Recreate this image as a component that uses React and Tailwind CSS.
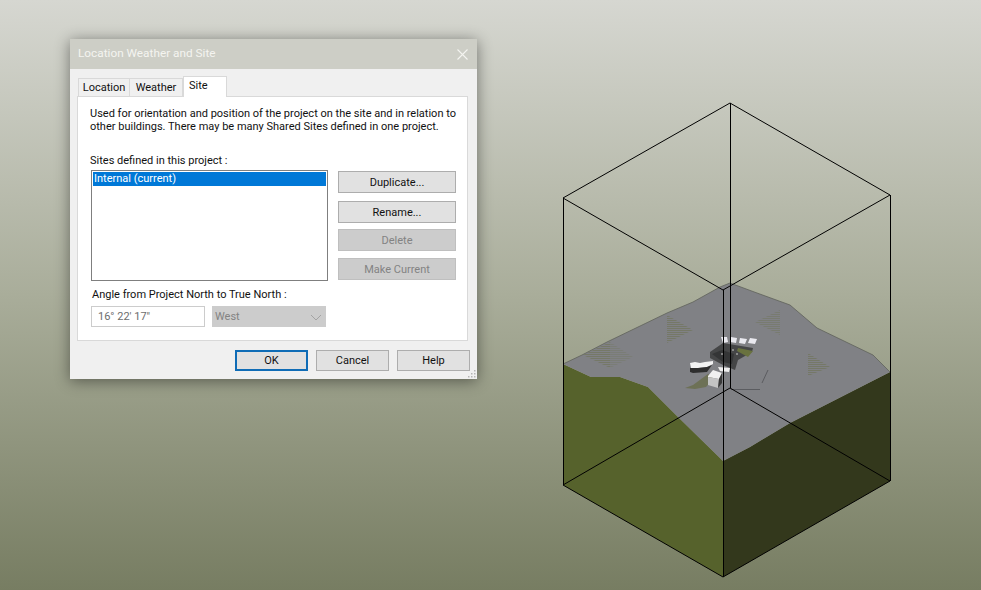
import React from 'react';

const font = { fontFamily: 'Roboto, "Open Sans", sans-serif' };

// Perspective box with the terrain sitting inside it
const SiteModel = () => (
  <svg className="absolute inset-0" width="981" height="590" viewBox="0 0 981 590" fill="none">
    <defs>
      <pattern id="hatch" width="4" height="2" patternUnits="userSpaceOnUse">
        <rect width="4" height="0.8" fill="#6b7150" />
      </pattern>
    </defs>

    {/* side faces */}
    <polygon points="563,364 591,377 620,377 648,387 678,417 723,461 723,577 563,485" fill="#56622c" />
    <polygon points="723,461 750,447 790,423 890,372 890,481 723,577" fill="#33381c" />

    {/* terrain top */}
    <polygon
      points="563,364 582,355 607,342 667,313 693,302 720,287 730,283 757,293 790,305 817,328 873,355 890,372 790,423 750,447 723,461 678,417 648,387 620,377 591,377"
      fill="#808185"
    />
    <polyline
      points="563,364 582,355 607,342 667,313 693,302 720,287 730,283 757,293 790,305 817,328 873,355 890,372"
      stroke="#5f625a"
      strokeWidth="0.8"
    />

    {/* hatched mounds */}
    <polygon points="583,355 610,342 610,368" fill="url(#hatch)" opacity="0.7" />
    <polygon points="610,342 633,357 610,368" fill="url(#hatch)" opacity="0.35" />
    <polygon points="667,315 693,330 667,343" fill="url(#hatch)" opacity="0.7" />
    <polygon points="755,322 780,310 780,335" fill="url(#hatch)" opacity="0.5" />
    <polygon points="808,353 830,367 808,376" fill="url(#hatch)" opacity="0.7" />

    {/* building cluster */}
    <polygon points="685,388 693,385 708,374 714,378 706,387 695,389" fill="#6d7156" />
    <polygon points="710,352 723,343 753,348 752,352 738,360 735,370 723,365 710,358" fill="#454647" />
    <polygon points="712,354 722,350 734,354 732,364 723,362" fill="#343536" />
    <polygon points="738,348 753,351 748,357 737,351" fill="#69723f" />
    <polygon points="721,337 727,337 728,342 723,343" fill="#e9e9ef" />
    <polygon points="731,337 737,338 736,343 730,342" fill="#e9e9ef" />
    <polygon points="740,338 747,339 745,344 739,343" fill="#e9e9ef" />
    <polygon points="750,338 757,339 755,344 748,343" fill="#e9e9ef" />
    <polygon points="690,363 695,362 700,363 705,362 713,361 713,364 707,367 698,368 691,368" fill="#f2f2f2" />
    <polygon points="690,368 698,368 707,367 712,365 707,372 693,373 690,372" fill="#2e2e2e" />
    <polygon points="708,376 713,370 722,373 719,379 708,377" fill="#f0f0f0" />
    <polygon points="708,377 719,379 718,388 708,385" fill="#c4c4c4" />
    <polygon points="719,379 722,373 722,383 718,388" fill="#3a3a3a" />
    <polygon points="718,367 730,368 729,372 720,371" fill="#efefef" />
    <line x1="762" y1="383" x2="768" y2="370" stroke="#5b5c60" strokeWidth="1" />
    <line x1="731" y1="389.5" x2="760" y2="389.5" stroke="#5b5c60" strokeWidth="1" />
    <circle cx="733" cy="350" r="0.8" fill="#ddd" />
    <circle cx="722" cy="354" r="0.8" fill="#ddd" />
    <circle cx="737" cy="354" r="0.8" fill="#ddd" />

    {/* box wireframe */}
    <g stroke="#000" strokeWidth="1">
      <polygon points="730,103 563,198 723,290 890,195" />
      <polygon points="730,388 563,485 723,577 890,481" />
      <line x1="563.5" y1="198" x2="563.5" y2="485" />
      <line x1="890.5" y1="195" x2="890.5" y2="481" />
      <line x1="730.5" y1="103" x2="730.5" y2="388" />
      <line x1="723.5" y1="290" x2="723.5" y2="577" />
    </g>
  </svg>
);

const SideButton = ({ children, disabled }) => (
  <button
    className={`h-[22px] w-[118px] border pt-[2px] text-[11px] ${
      disabled ? 'border-[#bfbfbf] bg-[#cccccc] text-[#838383]' : 'border-[#adadad] bg-[#e1e1e1] text-[#111]'
    }`}
  >
    {children}
  </button>
);

const FooterButton = ({ children, primary }) => (
  <button
    className={`h-[21px] w-[73px] bg-[#e1e1e1] pt-px text-[11px] text-[#111] ${
      primary ? 'border-2 border-[#0f6cb6]' : 'border border-[#adadad]'
    }`}
  >
    {children}
  </button>
);

const Dialog = () => (
  <div
    style={font}
    className="absolute left-[70px] top-[39px] flex h-[340px] w-[407px] flex-col bg-[#f0f0f0] shadow-[0_2px_14px_rgba(0,0,0,0.45)]"
  >
    {/* Title bar */}
    <div className="flex h-[30px] items-center justify-between bg-[#cdcec6] pl-[8px] pr-[9px]">
      <span className="text-[11.8px] text-[#f4f4f0]">Location Weather and Site</span>
      <svg width="11" height="11" viewBox="0 0 11 11" stroke="#f4f4f0" strokeWidth="1.1">
        <path d="M0.5 0.5 L10.5 10.5 M10.5 0.5 L0.5 10.5" />
      </svg>
    </div>

    {/* Tabs */}
    <div className="mt-[7px] flex h-[20px] items-end pl-[8px] text-[11px] text-[#111]">
      <div className="flex h-[18px] w-[52px] items-center justify-center border border-b-0 border-[#d9d9d9] bg-[#f0f0f0] pt-px">Location</div>
      <div className="flex h-[18px] w-[53px] items-center justify-center border-y border-r border-b-0 border-[#d9d9d9] bg-[#f0f0f0] pt-px">Weather</div>
      <div className="relative z-10 -mb-px flex h-[21px] w-[44px] justify-start border border-b-0 border-[#d9d9d9] bg-white pl-[5px] leading-[18px]">Site</div>
    </div>

    {/* Panel */}
    <div className="ml-[7px] flex h-[245px] w-[391px] flex-col border border-[#d9d9d9] bg-white pl-[12px] text-[11px] text-[#111]">
      <p className="mt-[10px] w-[370px] whitespace-nowrap leading-[13px]">
        Used for orientation and position of the project on the site and in relation to
        <br />
        other buildings. There may be many Shared Sites defined in one project.
      </p>
      <div className="mt-[20px] leading-[16px]">Sites defined in this project :</div>
      <div className="ml-px mt-px flex gap-[10px]">
        <div className="h-[111px] w-[237px] border border-[#7f7f7f] p-px">
          <div className="h-[14px] bg-[#0078d7] pl-px leading-[14px] text-white">Internal (current)</div>
        </div>
        <div className="flex flex-col pt-px">
          <SideButton>Duplicate...</SideButton>
          <div className="mt-[8px]"><SideButton>Rename...</SideButton></div>
          <div className="mt-[6px]"><SideButton disabled>Delete</SideButton></div>
          <div className="mt-[7px]"><SideButton disabled>Make Current</SideButton></div>
        </div>
      </div>
      <div className="ml-[2px] mt-[6px] leading-[16px]">Angle from Project North to True North :</div>
      <div className="ml-px mt-[3px] flex gap-[7px]">
        <div className="flex h-[21px] w-[114px] items-center border border-[#cccccc] pl-[6px] pt-px text-[#6d6d6d]">16° 22' 17"</div>
        <div className="flex h-[21px] w-[114px] items-center justify-between bg-[#cccccc] pl-[3px] pr-[4px] pt-[2px] text-[#838383]">
          West
          <svg width="12" height="7" viewBox="0 0 12 7" fill="none" stroke="#a3a3a3" strokeWidth="1">
            <path d="M1 1 L6 6 L11 1" />
          </svg>
        </div>
      </div>
    </div>

    {/* Footer */}
    <div className="relative flex flex-1 items-start justify-end gap-[8px] pr-[7px] pt-[9px]">
      <FooterButton primary>OK</FooterButton>
      <FooterButton>Cancel</FooterButton>
      <FooterButton>Help</FooterButton>
      <svg className="absolute bottom-px right-px" width="8" height="8" viewBox="0 0 8 8" fill="#b5b5b5">
        <rect x="6" y="0" width="1.5" height="1.5" />
        <rect x="3" y="3" width="1.5" height="1.5" />
        <rect x="6" y="3" width="1.5" height="1.5" />
        <rect x="0" y="6" width="1.5" height="1.5" />
        <rect x="3" y="6" width="1.5" height="1.5" />
        <rect x="6" y="6" width="1.5" height="1.5" />
      </svg>
    </div>
  </div>
);

export default function App() {
  return (
    <div className="relative h-[590px] w-[981px] overflow-hidden bg-[linear-gradient(to_bottom,#d6d7d1,#a9ad9a_50%,#777d62)]">
      <SiteModel />
      <Dialog />
    </div>
  );
}
